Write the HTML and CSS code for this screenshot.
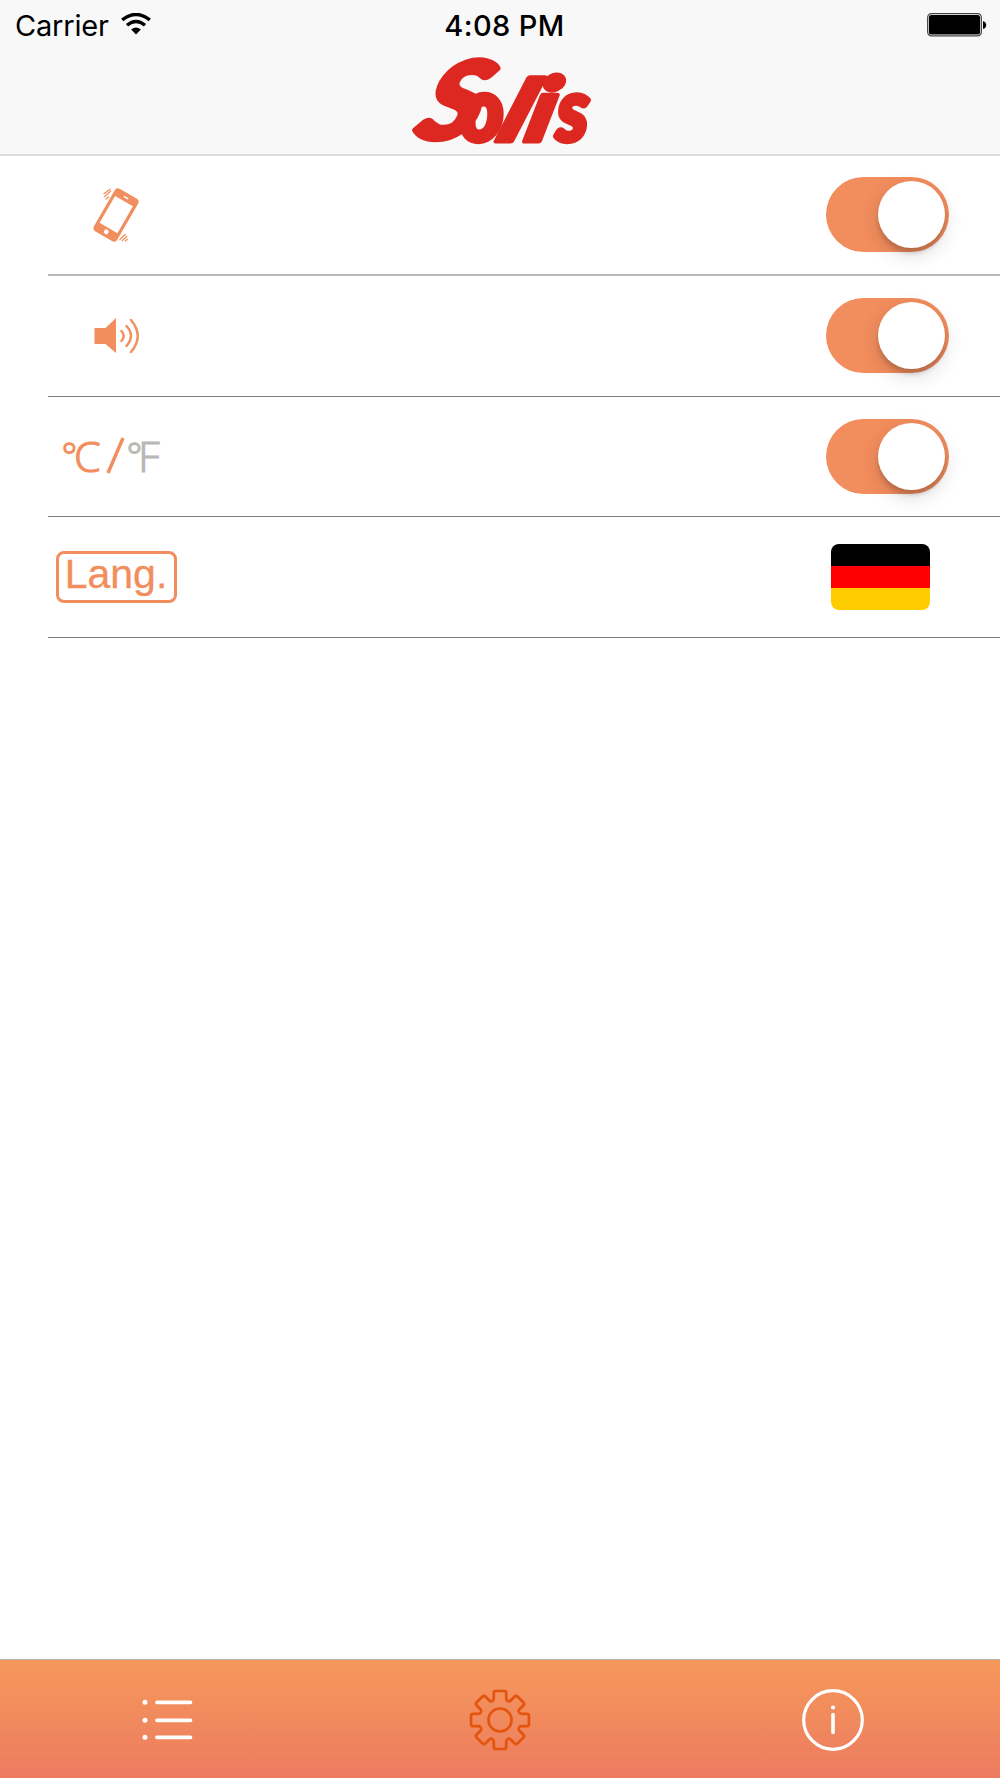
FILE: index.html
```html
<!DOCTYPE html>
<html lang="en">
<head>
<meta charset="utf-8">
<title>Solis Settings</title>
<link rel="stylesheet" href="styles.css">
</head>
<body>
<header class="header">
  <div class="status">
    <div class="carrier">
      <span>Carrier</span>
      <svg class="wifi" width="30" height="22" viewBox="0 0 30 22">
        <path d="M1.2 6.8Q15-4 28.8 6.8" fill="none" stroke="#000" stroke-width="3.4"/>
        <path d="M6 12.2Q15 4.6 24 12.2" fill="none" stroke="#000" stroke-width="3.4"/>
        <path d="M10.200 16.400Q15 12.400 19.800 16.400L15 21.400Z"/>
      </svg>
    </div>
    <time class="time">4:08 PM</time>
    <svg class="battery" width="60" height="24" viewBox="0 0 60 24">
      <rect x=".7" y=".7" width="53.6" height="22.2" rx="3.8" fill="#fff" stroke="#444" stroke-width="1.3"/>
      <rect x="2" y="2" width="51" height="19.6" rx="2.2"/>
      <path d="M56 8q3.200 1 3.200 4t-3.200 4z"/>
    </svg>
  </div>
  <svg class="logo" width="184" height="92" viewBox="0 0 184 92" role="img" aria-label="Solis">
    <text class="mark-s" transform="translate(4 85) skewX(-20) scale(1.080 1)">S</text>
    <text class="mark" transform="translate(52 87) scale(.98 1.050)">o</text>
    <text class="mark" transform="translate(87 87) skewX(-20) scale(1.250 1)">l</text>
    <text class="mark" transform="translate(115 87) skewX(-14) scale(1.200 1.040)">i</text>
    <text class="mark" transform="translate(148 87) skewX(-2) scale(.92 1.040)">s</text>
  </svg>
</header>

<main class="settings">
  <section class="row">
    <div class="label">
      <svg width="50" height="60" viewBox="0 0 50 60">
        <g transform="translate(25 30) rotate(30)">
          <rect x="-13.500" y="-24.500" width="27" height="49" rx="4" fill="#f28d5d"/>
          <rect x="-10.300" y="-16" width="20.600" height="31" fill="#fff"/>
          <path d="M-2-20H2" stroke="#fff" stroke-width="1.500" stroke-linecap="round"/>
          <circle cx="0" cy="19.500" r="2.400" fill="#fff"/>
        </g>
        <path class="ticks" d="M12.500 9l7-5M13 12l7-6M14.500 14.500l3.500-3M28.500 55l6-6M31 56l5-5M34 56.500l2.500-2.500"/>
      </svg>
    </div>
    <button class="switch" role="switch" aria-checked="true" aria-label="Vibration"><span class="knob"></span></button>
  </section>
  <section class="row">
    <div class="label">
      <svg width="50" height="44" viewBox="0 0 50 44">
        <path d="M3.500 14H14.500L25 4V39L14.500 30H3.500Z" fill="#f28d5d"/>
        <path class="wave" d="M30.500 17q4.500 5 0 10M35.500 12q9 9.500 0 20M40 6q13.500 16 0 32"/>
      </svg>
    </div>
    <button class="switch" role="switch" aria-checked="true" aria-label="Sound"><span class="knob"></span></button>
  </section>
  <section class="row">
    <div class="label units">
      <svg width="110" height="60" viewBox="0 -4 110 60">
        <g class="unit">
          <text class="degree" x="-.5" y="39">°</text><text x="12" y="42">C</text>
          <path d="M46 43L61 8" stroke="#f28d5d" stroke-width="3.400"/>
        </g>
        <g class="unit off"><text class="degree" x="64.500" y="39">°</text><text x="76" y="42">F</text></g>
      </svg>
    </div>
    <button class="switch" role="switch" aria-checked="true" aria-label="Celsius"><span class="knob"></span></button>
  </section>
  <section class="row">
    <div class="label"><span class="lang">Lang.</span></div>
    <div class="flag" role="img" aria-label="German"></div>
  </section>
</main>

<nav class="tabs">
  <a class="tab">
    <svg width="64" height="64" viewBox="0 0 64 64" fill="none" stroke="#fff" stroke-width="3.800" stroke-linecap="round">
      <path d="M22 14.300H55.500M22 32.300H55.500M22 49.300H55.500"/>
      <path stroke-width="5" d="M10 14.300h.01M10 32.300h.01M10 49.300h.01"/>
    </svg>
  </a>
  <a class="tab">
    <svg width="64" height="64" viewBox="-32 -32 64 64" fill="none" stroke="#e4540c" stroke-width="2.700">
      <defs><path id="tooth" d="M-7.800-18.900Q-6.200-19.600-6.200-22V-27Q-6.200-29-4.200-29H4.200Q6.200-29 6.200-27V-22Q6.200-19.600 7.800-18.900"/></defs>
      <use href="#tooth"/><use href="#tooth" transform="rotate(45)"/><use href="#tooth" transform="rotate(90)"/><use href="#tooth" transform="rotate(135)"/>
      <use href="#tooth" transform="rotate(180)"/><use href="#tooth" transform="rotate(225)"/><use href="#tooth" transform="rotate(270)"/><use href="#tooth" transform="rotate(315)"/>
      <circle r="11.500"/>
    </svg>
  </a>
  <a class="tab">
    <svg width="64" height="64" viewBox="-32 -32 64 64" fill="none" stroke="#fff" stroke-linecap="round">
      <circle r="29.300" stroke-width="3.200"/>
      <path d="M0-5.500V12.500" stroke-width="3.600"/>
      <circle cy="-12.500" r="2.100" fill="#fff" stroke="none"/>
    </svg>
  </a>
</nav>
</body>
</html>
```
FILE: styles.css
```css
* { box-sizing: border-box; }
body {
  margin: 0;
  height: 1778px;
  display: flex;
  flex-direction: column;
  background: #fff;
  font-family: Inter, "Liberation Sans", sans-serif;
  color: #000;
}
svg { display: block; flex: none; }
.header {
  height: 156px;
  background: #f8f8f8;
  border-bottom: 2px solid #dcdcdc;
}
.status {
  height: 54px;
  padding: 0 13px 3px 15px;
  display: grid;
  grid-template-columns: 1fr auto 1fr;
  align-items: center;
  font-size: 29px;
  line-height: 36px;
}
.carrier { display: flex; align-items: center; gap: 12px; letter-spacing: -.2px; }
.wifi { margin-top: -3px; }
.time { font-weight: 500; letter-spacing: .4px; margin-left: 7px; }
.battery { justify-self: end; margin-top: -1px; }
.logo { margin: 0 auto; overflow: visible; }
.mark-s, .mark {
  font-family: Lato, "Liberation Sans", sans-serif;
  font-weight: 900;
  font-style: italic;
  fill: #dc2820;
  stroke: #dc2820;
  stroke-width: 5px;
  stroke-linejoin: round;
}
.mark-s { font-size: 108px; }
.mark { font-size: 85px; }

.settings { flex: 1; padding-left: 48px; }
.row {
  height: 120.600px;
  padding-right: 51px;
  display: flex;
  align-items: center;
  justify-content: space-between;
  border-bottom: 1px solid #7c7c7c;
}
.row:first-child { height: 120px; border-bottom: 2px solid #b8b8b8; }
.row:first-child .switch { margin-top: -1px; }
.row:last-child { height: 121px; }
.label { width: 136px; display: flex; justify-content: center; }
.units { padding-left: 1px; }
.ticks { fill: none; stroke: #f28d5d; stroke-width: 1.300px; }
.wave { fill: none; stroke: #f28d5d; stroke-width: 2.400px; stroke-linecap: round; }
.unit { font: 300 43px "Open Sans", "Noto Sans", sans-serif; fill: #f28d5d; stroke: #f28d5d; stroke-width: 1.200px; }
.degree { font-size: 37px; }
.off { fill: #b8b8b8; stroke: #b8b8b8; }
.lang {
  width: 121px;
  height: 52px;
  border: 3px solid #f28d5d;
  border-radius: 8px;
  font: 41px/40px "Liberation Sans", Arial, sans-serif;
  -webkit-text-stroke: .3px #f28d5d;
  text-align: center;
  color: #f28d5d;
}
.switch {
  width: 123px;
  height: 75px;
  padding: 4px;
  border: 0;
  border-radius: 38px;
  background: #f28d5d;
  display: flex;
  justify-content: flex-end;
}
.knob {
  width: 67px;
  height: 67px;
  border-radius: 50%;
  background: #fff;
  box-shadow: 0 7px 20px rgba(0,0,0,.14), 0 5px 4px rgba(0,0,0,.15);
}
.flag {
  width: 99px;
  height: 66px;
  margin-right: 19px;
  border-radius: 8px;
  background: linear-gradient(#000 0 33.300%, #f00 33.300% 66.600%, #fc0 66.600%);
}
.tabs {
  height: 119px;
  display: grid;
  grid-template-columns: repeat(3, 1fr);
  border-top: 1px solid #b9b3ae;
  background: linear-gradient(#f6985b, #ec7b60);
}
.tab { display: flex; align-items: center; justify-content: center; padding-top: 2px; }
```
